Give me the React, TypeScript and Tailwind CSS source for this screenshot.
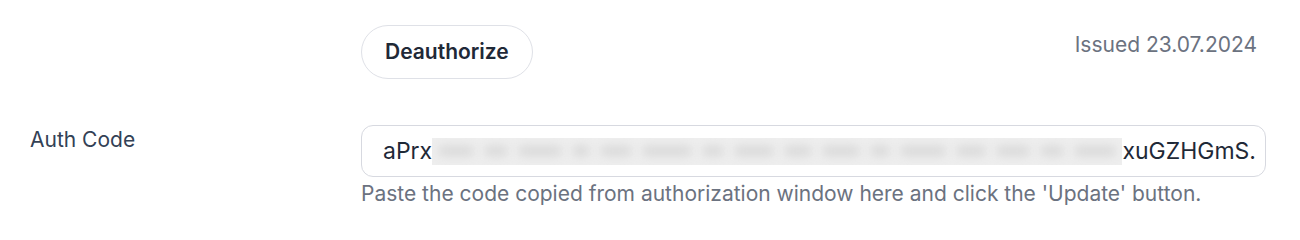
import React from 'react';

// Taches floues qui masquent le milieu du code
const smudges = [18, 12, 22, 9, 16, 25, 11, 20, 14, 19, 10, 23, 15, 17, 12, 21];

export default function App() {
  return (
    <div
      className="w-[1300px] h-[240px] bg-white text-[#1e293b]"
      style={{ fontFamily: 'Inter, "Noto Sans", sans-serif' }}
    >
      <div className="grid grid-cols-[331px_1fr] gap-y-[46px] pl-[30px] pr-[34px] pt-[25px]">
        {/* Ligne du bouton */}
        <div />
        <div className="flex items-start justify-between">
          <button className="h-[54px] px-[23px] rounded-full border border-[#dfe1e7] bg-white text-[21px] font-semibold text-[#1f2937]">
            Deauthorize
          </button>
          <span className="mt-[4px] pr-[9px] text-[21px] text-[#6b7280]">Issued 23.07.2024</span>
        </div>

        {/* Ligne du code */}
        <div className="pt-[1px] text-[21px] leading-[28px] text-[#334155]">Auth Code</div>
        <div>
          <div className="h-[52px] rounded-[12px] border border-[#d7d9e0] flex items-center pl-[21px] pr-[9px] text-[23px] text-[#1f2937] overflow-hidden">
            <span>aPrx</span>
            <div className="flex-1 h-[27px] bg-[#eeeeee] overflow-hidden flex items-center gap-[10px] px-[6px]">
              {smudges.map((w, i) => (
                <div
                  key={i}
                  className="h-[12px] rounded-full bg-[#dcdcdc] blur-[4px]"
                  style={{ width: w * 2 }}
                />
              ))}
            </div>
            <span>xuGZHGmS.</span>
          </div>
          <p className="mt-[3px] text-[21px] leading-[28px] text-[#6b7280]">
            Paste the code copied from authorization window here and click the 'Update' button.
          </p>
        </div>
      </div>
    </div>
  );
}
